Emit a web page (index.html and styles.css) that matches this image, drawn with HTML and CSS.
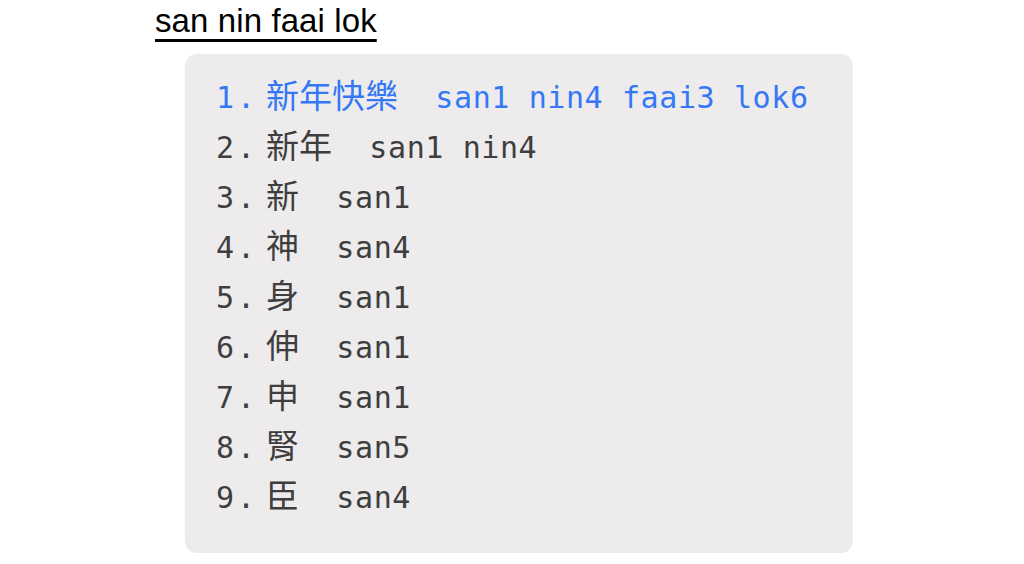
FILE: index.html
```html
<!DOCTYPE html>
<html lang="zh-Hant">
<head>
<meta charset="utf-8">
<title>san nin faai lok</title>
<link rel="stylesheet" href="styles.css">
</head>
<body>
<main class="page">
  <div class="query">san nin faai lok</div>
  <ol class="candidates">
    <li class="item active"><span class="num">1.</span><span class="hanzi">新年快樂</span><span class="jyut">  san1 nin4 faai3 lok6</span></li>
    <li class="item"><span class="num">2.</span><span class="hanzi">新年</span><span class="jyut">  san1 nin4</span></li>
    <li class="item"><span class="num">3.</span><span class="hanzi">新</span><span class="jyut">  san1</span></li>
    <li class="item"><span class="num">4.</span><span class="hanzi">神</span><span class="jyut">  san4</span></li>
    <li class="item"><span class="num">5.</span><span class="hanzi">身</span><span class="jyut">  san1</span></li>
    <li class="item"><span class="num">6.</span><span class="hanzi">伸</span><span class="jyut">  san1</span></li>
    <li class="item"><span class="num">7.</span><span class="hanzi">申</span><span class="jyut">  san1</span></li>
    <li class="item"><span class="num">8.</span><span class="hanzi">腎</span><span class="jyut">  san5</span></li>
    <li class="item"><span class="num">9.</span><span class="hanzi">臣</span><span class="jyut">  san4</span></li>
  </ol>
</main>
</body>
</html>
```
FILE: styles.css
```css
html, body {
  margin: 0;
  padding: 0;
  background: #ffffff;
}

.page {
  padding: 2px 0 0 155px;
}

.query {
  display: inline-block;
  font-family: "Liberation Sans", Arial, sans-serif;
  font-size: 33px;
  letter-spacing: 0.1px;
  color: #000000;
  text-decoration: underline;
  text-decoration-thickness: 3px;
  text-underline-offset: 7px;
}

.candidates {
  list-style: none;
  margin: 14px 0 0 30px;
  width: 668px;
  box-sizing: border-box;
  padding: 15px 0 34px 31px;
  background: #edebec;
  border-radius: 12px;
  font-family: "DejaVu Sans Mono", "Noto Sans CJK TC", monospace;
  font-size: 30px;
  letter-spacing: 0.6px;
  color: #3e3e3e;
}

.item {
  display: flex;
  align-items: baseline;
  height: 50px;
  line-height: 50px;
  white-space: pre;
}

.item.active {
  color: #3478f6;
}

.num {
  width: 50px;
  flex: none;
  letter-spacing: 3px;
}

.hanzi {
  font-family: "Noto Sans CJK TC", "Noto Sans CJK SC", sans-serif;
  font-size: 33px;
  letter-spacing: 0;
}
```
